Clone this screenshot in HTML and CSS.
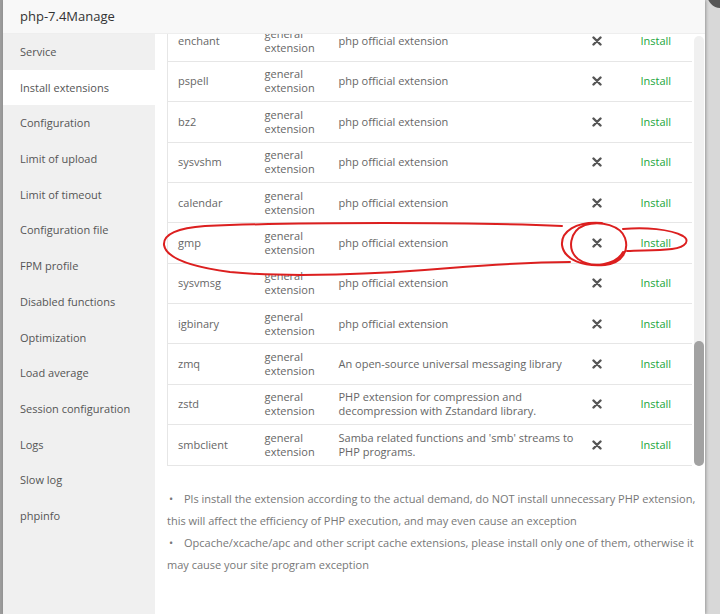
FILE: index.html
```html
<!DOCTYPE html>
<html lang="en">
<head>
    <meta charset="UTF-8">
    <meta name="viewport" content="width=device-width, initial-scale=1.0">
    <title>php-7.4Manage</title>
    <link rel="stylesheet" href="styles.css">
</head>
<body>
    <div class="layer">
        <div class="layer-title">php-7.4Manage</div>
        <span class="layer-close"></span>
        <div class="layer-body">
            <ul class="side-menu">
                <li>Service</li>
                <li class="active">Install extensions</li>
                <li>Configuration</li>
                <li>Limit of upload</li>
                <li>Limit of timeout</li>
                <li>Configuration file</li>
                <li>FPM profile</li>
                <li>Disabled functions</li>
                <li>Optimization</li>
                <li>Load average</li>
                <li>Session configuration</li>
                <li>Logs</li>
                <li>Slow log</li>
                <li>phpinfo</li>
            </ul>
            <div class="main-pane">
                <div class="ext-wrap">
                    <div class="ext-scroll" id="extScroll">
                        <table class="ext-table">
                            <colgroup>
                                <col class="c-name">
                                <col class="c-type">
                                <col class="c-desc">
                                <col class="c-status">
                                <col class="c-op">
                            </colgroup>
                            <thead>
                                <tr><th>Name</th><th>Type</th><th>Description</th><th>Status</th><th>Operation</th></tr>
                            </thead>
                            <tbody id="extRows"></tbody>
                        </table>
                    </div>
                    <div class="scrollbar"><div class="scrollbar-thumb"></div></div>
                </div>
                <ul class="help-list">
                    <li>Pls install the extension according to the actual demand, do NOT install unnecessary PHP extension, this will affect the efficiency of PHP execution, and may even cause an exception</li>
                    <li>Opcache/xcache/apc and other script cache extensions, please install only one of them, otherwise it may cause your site program exception</li>
                </ul>
            </div>
        </div>
    </div>

    <svg class="marks" width="720" height="614" viewBox="0 0 720 614">
        <path d="M562 226 C470 222, 300 222, 205 226 C178 228, 163 234, 164 245 C166 257, 185 266, 230 272 C290 278, 380 274, 450 268 C500 264, 540 262, 570 262"/>
        <path d="M602 223 C575 221, 561 232, 562 245 C564 260, 584 267, 605 265 C623 263, 629 250, 625 238 C621 226, 601 220, 585 225 C569 231, 567 250, 578 259 C592 269, 616 265, 623 252"/>
        <path d="M623 229 C645 227, 670 229, 683 236 C690 240, 687 247, 672 249 C655 251, 640 250, 627 251"/>
    </svg>

    <script>
        const general = 'general extension';
        const official = 'php official extension';
        const extensions = [
            ['ionCube', 'security', 'Encrypted PHP code loader'],
            ['fileinfo', general, official],
            ['opcache', 'cache', 'Script cache, speeds up PHP'],
            ['memcache', 'cache', 'Memcache client for PHP'],
            ['memcached', 'cache', 'Memcached client for PHP'],
            ['redis', 'cache', 'Redis client for PHP'],
            ['apcu', 'cache', 'User data cache'],
            ['imagemagick', general, 'Image processing library'],
            ['xdebug', 'debugger', 'Debugging and profiling tool'],
            ['imap', general, official],
            ['exif', general, official],
            ['intl', general, official],
            ['xsl', general, official],
            ['swoole', general, 'Asynchronous network framework'],
            ['swoole4', general, 'Asynchronous network framework'],
            ['yaf', 'framework', 'Yet another framework'],
            ['phalcon4', 'framework', 'High performance framework'],
            ['sg11', 'security', 'SourceGuardian loader'],
            ['mongodb', general, 'MongoDB driver for PHP'],
            ['yac', 'cache', 'Lockless user data cache'],
            ['ldap', general, official],
            ['sodium', general, official],
            ['mcrypt', general, 'Encryption functions'],
            ['snmp', general, official],
            ['pdo_sqlsrv', general, 'SQL Server driver'],
            ['enchant', general, official],
            ['pspell', general, official],
            ['bz2', general, official],
            ['sysvshm', general, official],
            ['calendar', general, official],
            ['gmp', general, official],
            ['sysvmsg', general, official],
            ['igbinary', general, official],
            ['zmq', general, 'An open-source universal messaging library'],
            ['zstd', general, 'PHP extension for compression and decompression with Zstandard library.'],
            ['smbclient', general, "Samba related functions and 'smb' streams to PHP programs."]
        ];

        const xIcon = '<svg class="x-icon" width="10" height="10" viewBox="0 0 10 10"><path d="M1.5 1.5 L8.5 8.5 M8.5 1.5 L1.5 8.5"/></svg>';

        const rows = document.getElementById('extRows');
        extensions.forEach(ext => {
            const tr = document.createElement('tr');
            tr.innerHTML = `<td>${ext[0]}</td><td>${ext[1]}</td><td>${ext[2]}</td><td class="status">${xIcon}</td><td class="op"><a href="#">Install</a></td>`;
            rows.appendChild(tr);
        });

        const box = document.getElementById('extScroll');
        box.scrollTop = box.scrollHeight;
    </script>
</body>
</html>
```

FILE: styles.css
```css
html, body {
    margin: 0;
    padding: 0;
    height: 100%;
    overflow: hidden;
}
body {
    background: linear-gradient(to right, #9c9c9c 3px, #d8d8d8 3px);
    font-family: "Open Sans", "Noto Sans", sans-serif;
    color: #666;
    position: relative;
}
.layer {
    position: relative;
    margin-left: 3px;
    width: 702px;
    height: 614px;
    background: #fff;
    box-shadow: 1px 0 3px rgba(0, 0, 0, 0.3);
    display: flex;
    flex-direction: column;
}
.layer-title {
    height: 33px;
    line-height: 32px;
    padding-left: 17px;
    font-size: 13px;
    color: #333;
    background: #f8f8f8;
    border-bottom: 1px solid #eee;
    flex-shrink: 0;
}
.layer-close {
    position: absolute;
    top: -20px;
    right: -30px;
    width: 28px;
    height: 28px;
    border-radius: 50%;
    background: #565656;
}
.layer-body {
    flex: 1;
    display: flex;
    min-height: 0;
}
.side-menu {
    width: 152px;
    margin: 0;
    padding: 0;
    list-style: none;
    background: #f0f0f0;
    flex-shrink: 0;
}
.side-menu li {
    height: 35.7px;
    line-height: 35.7px;
    padding-left: 17px;
    font-size: 11px;
    color: #555;
}
.side-menu li.active {
    background: #fff;
}
.main-pane {
    flex: 1;
    padding-left: 12px;
}
.ext-wrap {
    display: flex;
    gap: 2px;
    height: 432px;
}
.ext-scroll {
    width: 525px;
    overflow: hidden;
}
.scrollbar {
    width: 10px;
    margin-top: 2px;
    background: #f0f0f0;
    border-radius: 5px;
    display: flex;
    flex-direction: column;
    justify-content: flex-end;
}
.scrollbar-thumb {
    height: 125px;
    background: #a2a2a2;
    border-radius: 5px;
}
.ext-table {
    width: 525px;
    table-layout: fixed;
    border-collapse: collapse;
    border: 1px solid #e6e6e6;
    font-size: 11px;
}
.c-name { width: 87px; }
.c-type { width: 74px; }
.c-desc { width: 257px; }
.c-status { width: 23px; }
.c-op { width: 84px; }
.ext-table th {
    text-align: left;
    font-weight: normal;
    background: #f6f6f6;
    padding: 12px 10px;
    color: #666;
}
.ext-table td {
    padding: 5.7px 10px;
    line-height: 14px;
    height: 28px;
    border-top: 1px solid #e6e6e6;
    color: #666;
}
.ext-table td.status {
    padding: 0;
    text-align: center;
}
.x-icon {
    display: block;
    margin: 0 auto;
}
.x-icon path {
    stroke: #555;
    stroke-width: 2.4;
    stroke-linecap: round;
}
.ext-table td.op {
    padding-left: 32px;
}
.ext-table td.op a {
    color: #20a53a;
    text-decoration: none;
}
.help-list {
    margin: 22px 0 0;
    padding: 0;
    list-style: none;
    font-size: 11px;
    line-height: 22px;
    color: #777;
}
.help-list li::before {
    content: "•";
    display: inline-block;
    width: 15px;
    padding-left: 2px;
}
.marks {
    position: absolute;
    left: 0;
    top: 0;
    pointer-events: none;
}
.marks path {
    fill: none;
    stroke: #dc1f1f;
    stroke-width: 2;
    stroke-linecap: round;
}
```
